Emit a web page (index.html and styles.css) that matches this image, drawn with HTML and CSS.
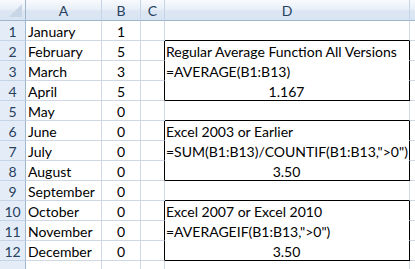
FILE: index.html
```html
<!DOCTYPE html>
<html>
<head>
<meta charset="utf-8">
<link rel="stylesheet" href="styles.css">
</head>
<body>
<div class="sheet">
  <div class="row hdr">
    <div class="c rh corner"><span class="tri"></span></div>
    <div class="c a ch">A</div>
    <div class="c b ch">B</div>
    <div class="c cc ch">C</div>
    <div class="c d ch">D</div>
    <div class="c e ch"></div>
  </div>
  <div class="row"><div class="c rh">1</div><div class="c a">January</div><div class="c b">1</div><div class="c cc"></div><div class="c d boxabove"></div><div class="c e"></div></div>
  <div class="row"><div class="c rh">2</div><div class="c a">February</div><div class="c b">5</div><div class="c cc boxleft"></div><div class="c d box">Regular Average Function All Versions</div><div class="c e"></div></div>
  <div class="row"><div class="c rh">3</div><div class="c a">March</div><div class="c b">3</div><div class="c cc boxleft"></div><div class="c d box">=AVERAGE(B1:B13)</div><div class="c e"></div></div>
  <div class="row"><div class="c rh">4</div><div class="c a">April</div><div class="c b">5</div><div class="c cc boxleft"></div><div class="c d box last mid">1.167</div><div class="c e"></div></div>
  <div class="row"><div class="c rh">5</div><div class="c a">May</div><div class="c b">0</div><div class="c cc"></div><div class="c d boxabove"></div><div class="c e"></div></div>
  <div class="row"><div class="c rh">6</div><div class="c a">June</div><div class="c b">0</div><div class="c cc boxleft"></div><div class="c d box">Excel 2003 or Earlier</div><div class="c e"></div></div>
  <div class="row"><div class="c rh">7</div><div class="c a">July</div><div class="c b">0</div><div class="c cc boxleft"></div><div class="c d box">=SUM(B1:B13)/COUNTIF(B1:B13,"&gt;0")</div><div class="c e"></div></div>
  <div class="row"><div class="c rh">8</div><div class="c a">August</div><div class="c b">0</div><div class="c cc boxleft"></div><div class="c d box last mid">3.50</div><div class="c e"></div></div>
  <div class="row"><div class="c rh">9</div><div class="c a">September</div><div class="c b">0</div><div class="c cc"></div><div class="c d boxabove"></div><div class="c e"></div></div>
  <div class="row"><div class="c rh">10</div><div class="c a">October</div><div class="c b">0</div><div class="c cc boxleft"></div><div class="c d box">Excel 2007 or Excel 2010</div><div class="c e"></div></div>
  <div class="row"><div class="c rh">11</div><div class="c a">November</div><div class="c b">0</div><div class="c cc boxleft"></div><div class="c d box">=AVERAGEIF(B1:B13,"&gt;0")</div><div class="c e"></div></div>
  <div class="row"><div class="c rh">12</div><div class="c a">December</div><div class="c b">0</div><div class="c cc boxleft"></div><div class="c d box last mid">3.50</div><div class="c e"></div></div>
  <div class="row"><div class="c rh"></div><div class="c a"></div><div class="c b"></div><div class="c cc"></div><div class="c d"></div><div class="c e"></div></div>
</div>
</body>
</html>
```
FILE: styles.css
```css
html, body {
  margin: 0;
  padding: 0;
  background: #ffffff;
  overflow: hidden;
}
.sheet {
  width: 415px;
  height: 269px;
  overflow: hidden;
  font-family: Lato, "Liberation Sans", sans-serif;
  font-size: 14px;
  color: #000;
}
.row {
  display: flex;
  height: 20px;
}
.row.hdr {
  height: 21px;
}
.c {
  box-sizing: border-box;
  flex: none;
  height: 100%;
  border-right: 1px solid #d0d7e5;
  border-bottom: 1px solid #d0d7e5;
  display: flex;
  align-items: flex-end;
  line-height: 17px;
  padding: 0 2px 0;
  white-space: nowrap;
  overflow: hidden;
}
.rh { width: 26px; justify-content: center; padding: 0; background: #e4ecf7; color: #27415f; border-bottom-color: #c5d4e6; border-right-color: #9eb6ce; }
.a { width: 76px; }
.b { width: 39px; justify-content: center; }
.cc { width: 24px; }
.d { width: 245px; }
.e { width: 5px; flex: 1; border-right: none; }
.ch {
  justify-content: center;
  background: linear-gradient(#f8fafd 0%, #eaf0f8 45%, #dce6f3 55%, #d9e4f2 100%);
  color: #27415f;
  border-bottom-color: #9eb6ce;
  border-right-color: #c5d4e6;
  padding-bottom: 1px;
}
.corner {
  position: relative;
  background: linear-gradient(#f8fafd 0%, #eaf0f8 45%, #dce6f3 55%, #d9e4f2 100%);
  border-bottom-color: #9eb6ce;
}
.tri {
  position: absolute;
  right: 3px;
  bottom: 3px;
  width: 0;
  height: 0;
  border-left: 13px solid transparent;
  border-bottom: 13px solid #c9d6e6;
}
.boxabove { border-bottom-color: #000; }
.boxleft { border-right-color: #000; }
.box { border-right-color: #000; border-bottom-color: #fff; padding-left: 1px; }
.box.last { border-bottom-color: #000; }
.mid { justify-content: center; }
```
